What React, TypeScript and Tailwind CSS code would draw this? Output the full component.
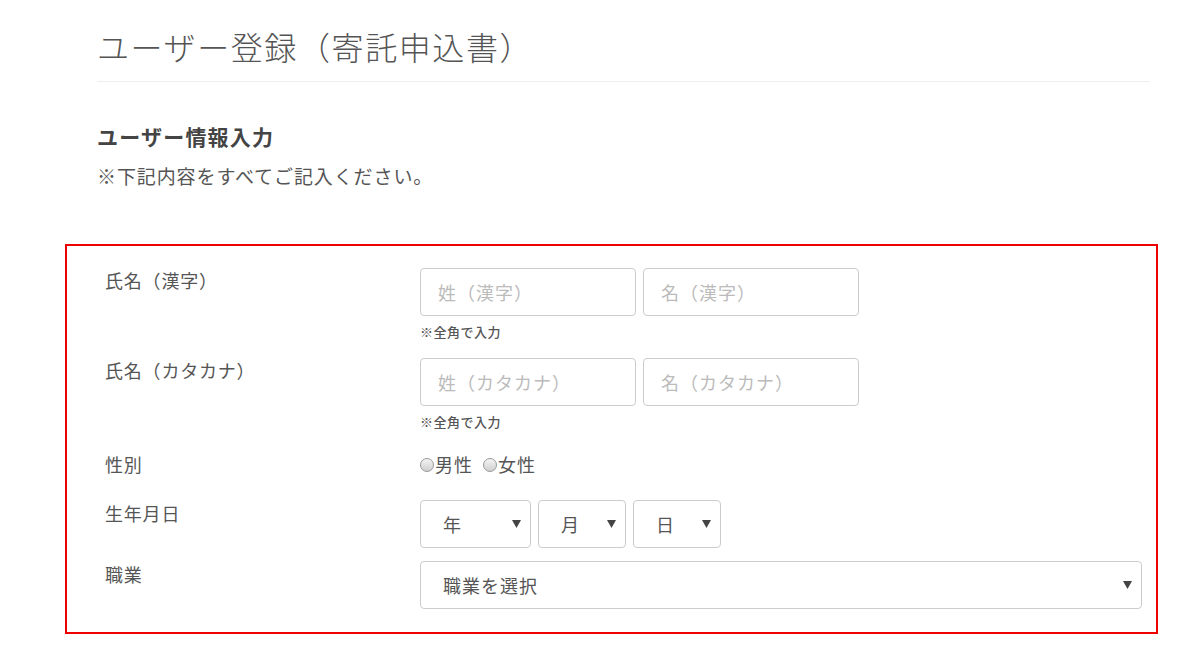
const font = "font-['Noto_Sans_CJK_JP','Noto_Sans',sans-serif]"

function Caret() {
  return (
    <svg width="9" height="8" viewBox="0 0 9 8" className="shrink-0">
      <path d="M0 0 L9 0 L4.5 8 Z" fill="#444" />
    </svg>
  )
}

function FakeSelect({ label, width }: { label: string; width: string }) {
  return (
    <div
      className={`${width} flex h-[48px] items-center justify-between rounded-[4px] border border-[#ccc] bg-white pl-[22px] pr-[9px] text-[18px] tracking-[1px] text-[#555]`}
    >
      <span>{label}</span>
      <Caret />
    </div>
  )
}

function TextBox({ placeholder }: { placeholder: string }) {
  return (
    <input
      placeholder={placeholder}
      className="h-[48px] w-[216px] rounded-[4px] border border-[#ccc] bg-white px-[17px] text-[18px] tracking-[1px] text-[#555] outline-none placeholder:text-[#bbb]"
    />
  )
}

function Radio({ label }: { label: string }) {
  return (
    <label className="flex items-center">
      <span className="mt-[1px] mr-[1px] inline-block h-[14px] w-[14px] shrink-0 rounded-full border border-[#999] bg-gradient-to-b from-[#f4f4f4] to-[#cfcfcf]" />
      <span className="tracking-[1px]">{label}</span>
    </label>
  )
}

function Row({
  label,
  children,
  className = "",
}: {
  label: string
  children: React.ReactNode
  className?: string
}) {
  return (
    <div className={`flex ${className}`}>
      <div className="w-[315px] shrink-0 text-[18px] leading-[26px] tracking-[0.8px] text-[#555]">{label}</div>
      <div className="flex-1">{children}</div>
    </div>
  )
}

export default function App() {
  return (
    <div className={`${font} min-h-[656px] w-[1200px] bg-white`}>
      <div className="px-[97px] pt-[22px]">
        <h1 className="text-[32px] leading-[48px] font-light tracking-[1.6px] text-[#555]">
          ユーザー登録（寄託申込書）
        </h1>
        <div className="mt-[11px] mr-[-47px] h-px bg-[#eee]" />
        <h2 className="mt-[39px] text-[21px] leading-[30px] font-bold tracking-[1.2px] text-[#444]">
          ユーザー情報入力
        </h2>
        <p className="mt-[12px] text-[19px] leading-[26px] tracking-[0.9px] text-[#555]">
          ※下記内容をすべてご記入ください。
        </p>
      </div>

      <div className="mx-[65px] mt-[55px] w-[1093px] border-2 border-[#e00] pt-[21px] pb-[23px] pl-[38px] pr-[15px]">
        <Row label="氏名（漢字）">
          <div className="mt-[1px] flex gap-[7px]">
            <TextBox placeholder="姓（漢字）" />
            <TextBox placeholder="名（漢字）" />
          </div>
          <div className="mt-[7px] text-[13px] leading-[18px] font-medium tracking-[0.5px] text-[#555]">※全角で入力</div>
        </Row>
        <Row label="氏名（カタカナ）" className="mt-[16px]">
          <div className="mt-[1px] flex gap-[7px]">
            <TextBox placeholder="姓（カタカナ）" />
            <TextBox placeholder="名（カタカナ）" />
          </div>
          <div className="mt-[7px] text-[13px] leading-[18px] font-medium tracking-[0.5px] text-[#555]">※全角で入力</div>
        </Row>
        <Row label="性別" className="mt-[20px]">
          <div className="flex items-center gap-[10px] text-[18px] leading-[26px] text-[#555]">
            <Radio label="男性" />
            <Radio label="女性" />
          </div>
        </Row>
        <Row label="生年月日" className="mt-[23px]">
          <div className="flex gap-[7px]">
            <FakeSelect label="年" width="w-[111px]" />
            <FakeSelect label="月" width="w-[88px]" />
            <FakeSelect label="日" width="w-[88px]" />
          </div>
        </Row>
        <Row label="職業" className="mt-[13px]">
          <FakeSelect label="職業を選択" width="w-[722px]" />
        </Row>
      </div>
    </div>
  )
}
